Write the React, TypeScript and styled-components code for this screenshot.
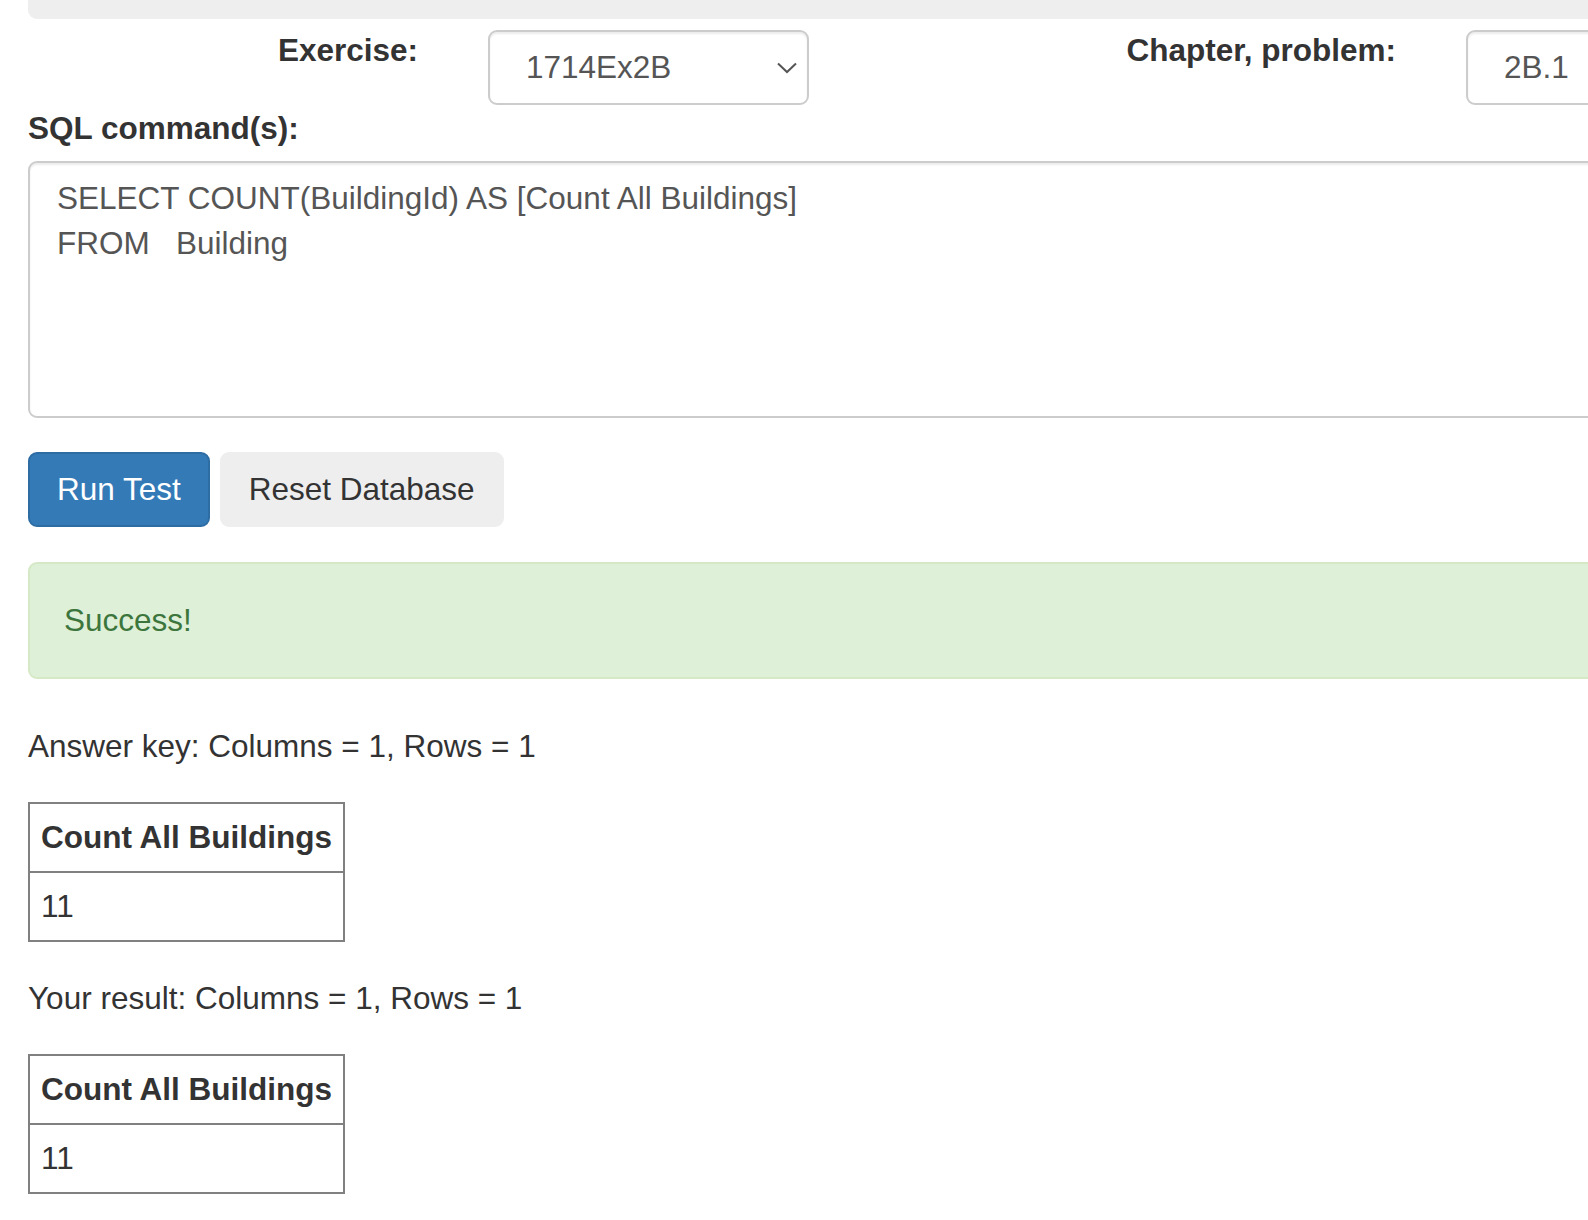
import styled, {createGlobalStyle} from "styled-components";

const GlobalStyle = createGlobalStyle`
    html, body {
        margin: 0;
        padding: 0;
        overflow: hidden;
        background: #fff;
    }
    body {
        font-family: "Liberation Sans", Arial, sans-serif;
        font-size: 31.5px;
        line-height: 45px;
        color: #333;
    }
    * {
        box-sizing: border-box;
    }
`

const resultTables = [
    {caption: "Answer key", column: "Count All Buildings", rows: ["11"]},
    {caption: "Your result", column: "Count All Buildings", rows: ["11"]},
];

const Chevron = () => (
    <svg width="20" height="12" viewBox="0 0 20 12" fill="none">
        <polyline points="1,1.5 10,10 19,1.5" stroke="#555" strokeWidth="2" strokeLinejoin="miter"/>
    </svg>
);

export default function App() {
    return (
        <>
            <GlobalStyle/>
            <Page>
                <TopBar/>
                <FormRow>
                    <FieldLabel>Exercise:</FieldLabel>
                    <SelectBox>
                        <span>1714Ex2B</span>
                        <Chevron/>
                    </SelectBox>
                    <FieldLabel>Chapter, problem:</FieldLabel>
                    <SelectBox>
                        <span>2B.1</span>
                    </SelectBox>
                </FormRow>
                <SqlLabel>SQL command(s):</SqlLabel>
                <SqlInput
                    readOnly
                    value={"SELECT COUNT(BuildingId) AS [Count All Buildings]\nFROM   Building"}
                />
                <Actions>
                    <Button variant="primary">Run Test</Button>
                    <Button variant="default">Reset Database</Button>
                </Actions>
                <Alert>Success!</Alert>
                {resultTables.map((t, i) => (
                    <ResultBlock key={i}>
                        <ResultCaption>{t.caption}: Columns = 1, Rows = {t.rows.length}</ResultCaption>
                        <ResultTable>
                            <thead>
                            <tr><th>{t.column}</th></tr>
                            </thead>
                            <tbody>
                            {t.rows.map((r, j) => <tr key={j}><td>{r}</td></tr>)}
                            </tbody>
                        </ResultTable>
                    </ResultBlock>
                ))}
            </Page>
        </>
    );
}

const Page = styled.div`
    width: 2600px;
    padding: 0 28px;
`

const TopBar = styled.div`
    height: 19px;
    background-color: #eee;
    border-radius: 0 0 0 9px;
    margin-bottom: 10px;
`

const FormRow = styled.div`
    display: grid;
    grid-template-columns: 390px 321px 517px 321px;
    column-gap: 70px;
    align-items: start;
    margin-bottom: 1px;
`

const FieldLabel = styled.label`
    font-weight: 700;
    text-align: right;
    line-height: 45px;
    margin-top: -1px;
`

const SelectBox = styled.div`
    height: 75px;
    margin-top: 1px;
    display: flex;
    align-items: center;
    justify-content: space-between;
    padding: 0 10px 0 36px;
    border: 2px solid #ccc;
    border-radius: 9px;
    box-shadow: inset 0 2px 2px rgba(0, 0, 0, .075);
    color: #555;
    background: #fff;
`

const SqlLabel = styled.label`
    display: block;
    font-weight: 700;
    margin-bottom: 10px;
`

const SqlInput = styled.textarea`
    display: block;
    width: 100%;
    height: 257px;
    padding: 13px 27px;
    border: 2px solid #ccc;
    border-radius: 9px;
    box-shadow: inset 0 2px 2px rgba(0, 0, 0, .075);
    font-family: "Liberation Sans", Arial, sans-serif;
    font-size: 31.5px;
    line-height: 45px;
    color: #555;
    resize: none;
    outline: none;
    margin: 0 0 34px;
    overflow: hidden;
`

const Actions = styled.div`
    display: flex;
    gap: 10px;
`

const Button = styled.button<{ variant: "primary" | "default" }>`
    height: 75px;
    padding: 0 27px;
    border-radius: 9px;
    border: 2px solid ${p => p.variant === "primary" ? "#2e6da4" : "#eee"};
    background-color: ${p => p.variant === "primary" ? "#337ab7" : "#eee"};
    color: ${p => p.variant === "primary" ? "#fff" : "#333"};
    font-family: "Liberation Sans", Arial, sans-serif;
    font-size: 31.5px;
    line-height: 45px;
    cursor: pointer;
`

const Alert = styled.div`
    margin-top: 35px;
    padding: 34px;
    border: 2px solid #d6e9c6;
    border-radius: 9px;
    background-color: #dff0d8;
    color: #3c763d;
`

const ResultBlock = styled.div`
    margin-top: 45px;

    & + & {
        margin-top: 34px;
    }
`

const ResultCaption = styled.div`
    margin-bottom: 33px;
`

const ResultTable = styled.table`
    border-collapse: collapse;
    border: 2px solid #808080;

    th, td {
        border: 2px solid #808080;
        padding: 11px 11px;
        text-align: left;
        line-height: 45px;
    }

    th {
        font-weight: 700;
    }
`
